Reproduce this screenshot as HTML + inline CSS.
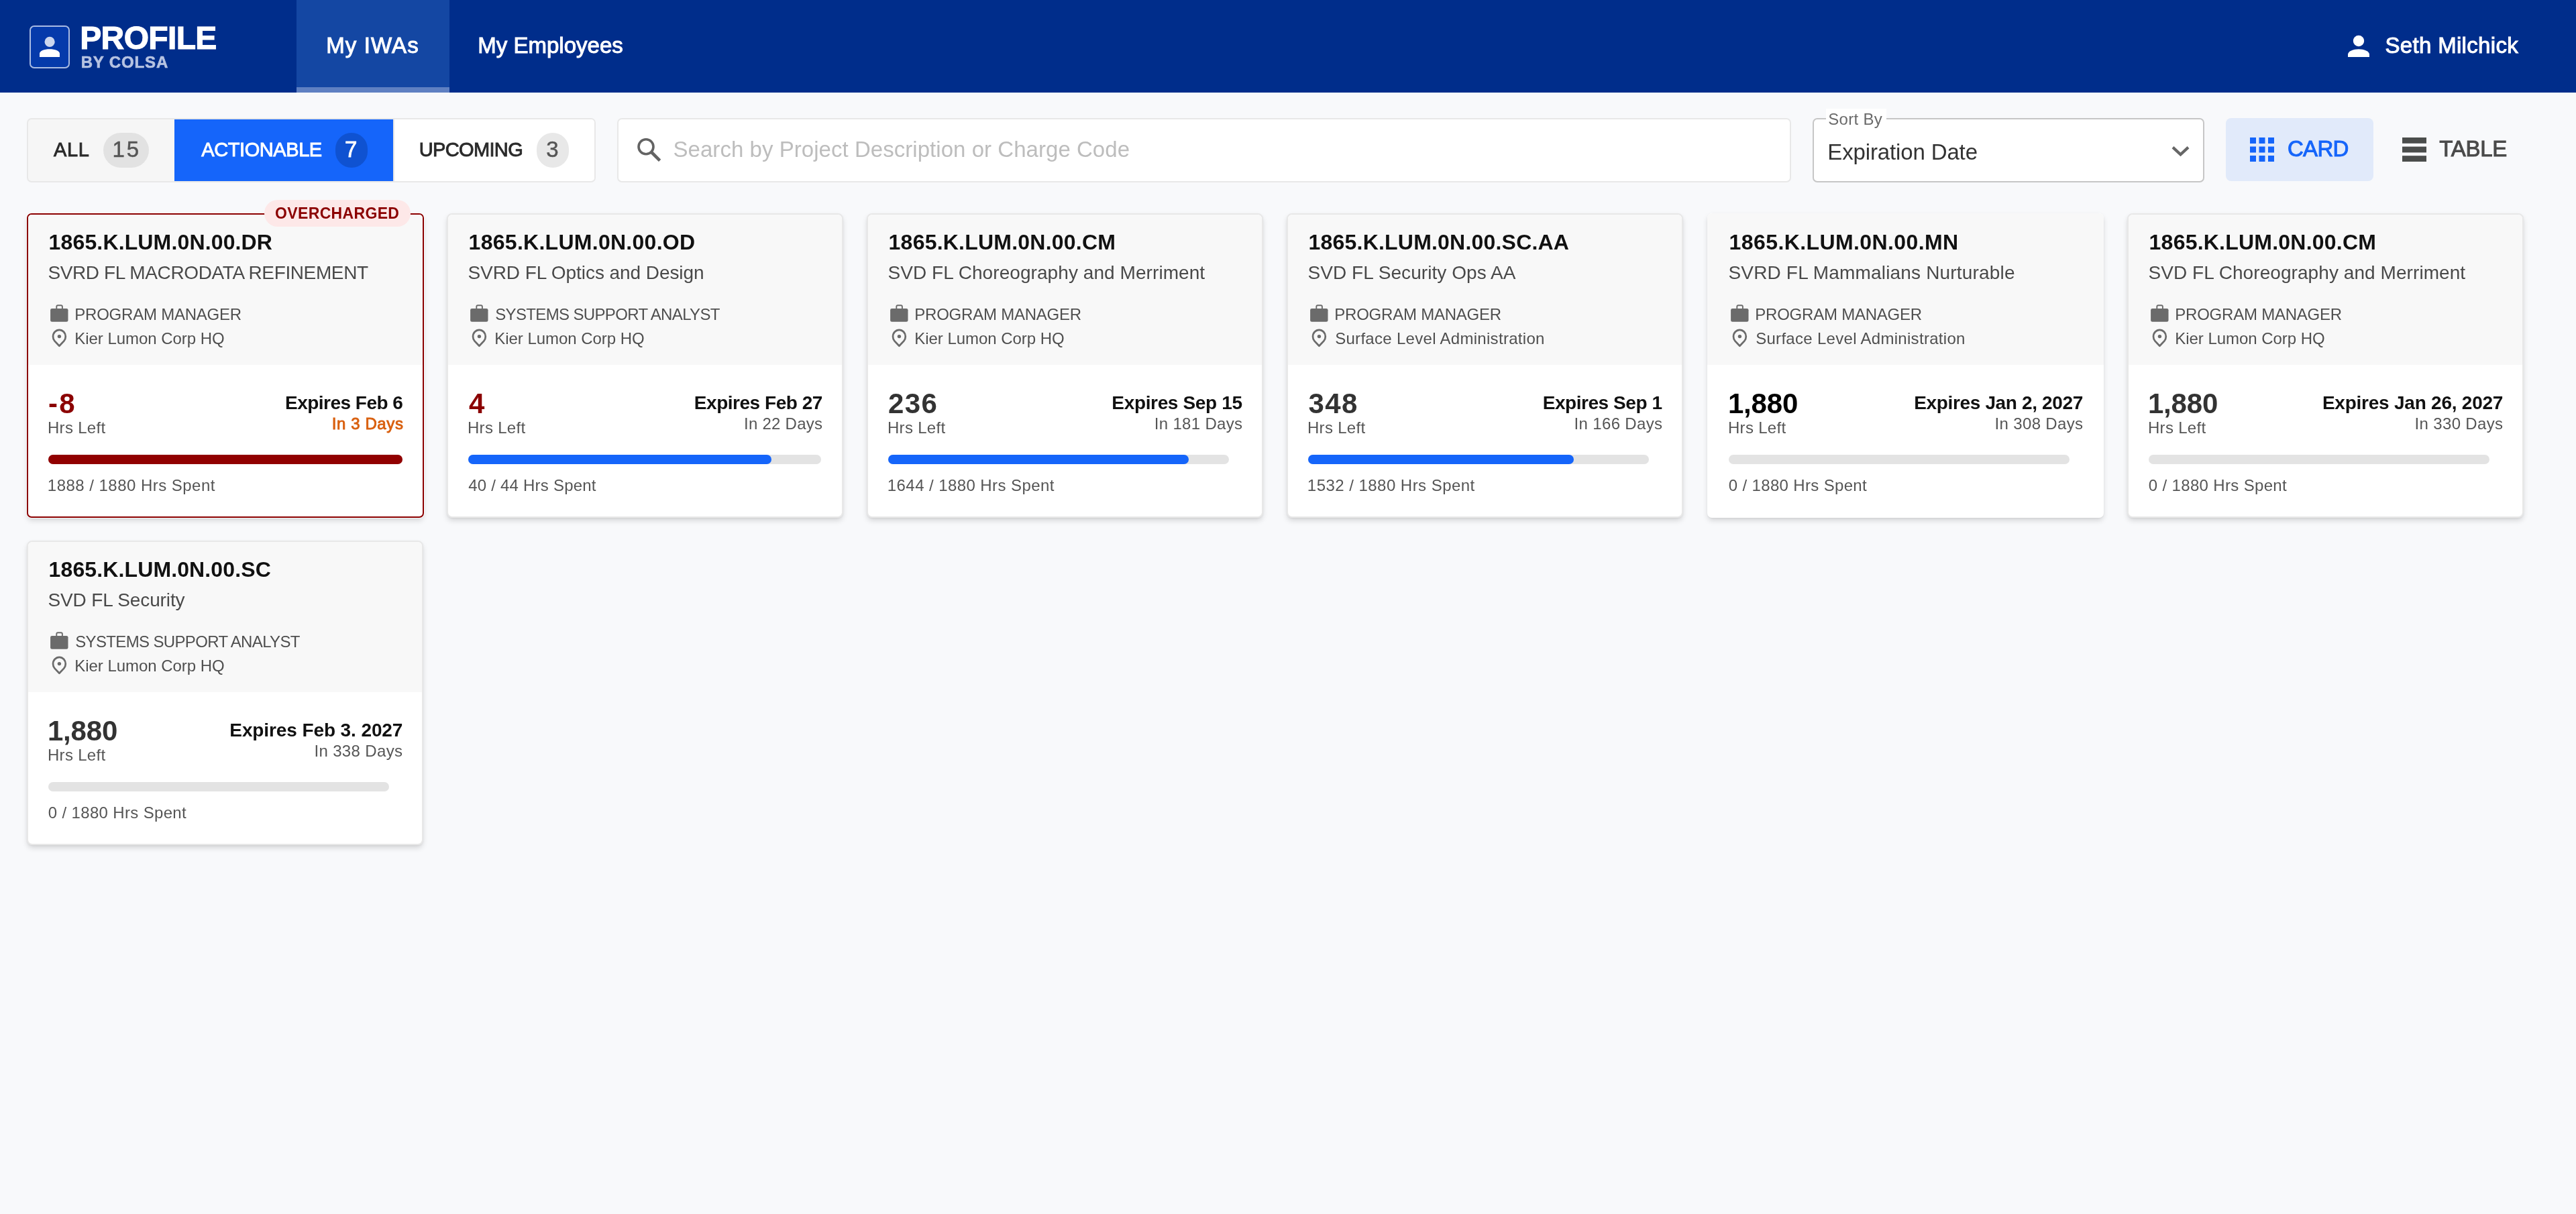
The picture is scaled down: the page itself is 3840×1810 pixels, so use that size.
<!DOCTYPE html><html><head><meta charset="utf-8"><style>
html,body{margin:0;padding:0;width:3840px;height:1810px;overflow:hidden;background:#f8f9fb;font-family:"Liberation Sans",sans-serif}
.t{position:absolute;white-space:nowrap}
</style></head><body><div id="w" style="position:absolute;left:0;top:0;width:3840px;height:1810px;will-change:transform">
<div style="position:absolute;left:0.00px;top:0.00px;width:3840.00px;height:138.00px;background:#002d8b"></div>
<div style="position:absolute;left:442.00px;top:0.00px;width:228.00px;height:130.00px;background:#1447a3"></div>
<div style="position:absolute;left:442.00px;top:130.00px;width:228.00px;height:8.00px;background:#5f80c2"></div>
<div style="position:absolute;left:44.00px;top:38.00px;width:60.00px;height:64.00px;background:#053aab;border:2px solid #a9bbe3;border-radius:7px;box-sizing:border-box"></div>
<svg style="position:absolute;left:44px;top:38px" width="60" height="64" viewBox="44 38 60 64"><circle cx="74.1" cy="62.4" r="7.6" fill="#cbd6ee"/><path d="M59 85 V80 C59 76 66 73.3 74 73.3 C82 73.3 89 76 89 80 V85 Z" fill="#fff"/></svg>
<div class="t" style="left:119.25px;top:33px;font-size:48px;line-height:48px;font-weight:700;color:#fff;letter-spacing:-0.646px;-webkit-text-stroke:1.10px #fff;">PROFILE</div>
<div class="t" style="left:120.67px;top:81px;font-size:24px;line-height:24px;font-weight:700;color:#b6c3e2;letter-spacing:0.861px;-webkit-text-stroke:0.60px #b6c3e2;">BY COLSA</div>
<div class="t" style="left:486.25px;top:51px;font-size:33px;line-height:33px;font-weight:400;color:#fff;letter-spacing:1.104px;-webkit-text-stroke:1.00px #fff;">My IWAs</div>
<div class="t" style="left:712.25px;top:51px;font-size:33px;line-height:33px;font-weight:400;color:#fff;letter-spacing:0.009px;-webkit-text-stroke:1.00px #fff;">My Employees</div>
<svg style="position:absolute;left:3496px;top:48px" width="40" height="40" viewBox="3496 48 40 40"><circle cx="3516" cy="61" r="8.2" fill="#fff"/><path d="M3500 85 V81 C3500 76.5 3508 73.2 3516 73.2 C3524 73.2 3532 76.5 3532 81 V85 Z" fill="#fff"/></svg>
<div class="t" style="left:3555.50px;top:51px;font-size:33px;line-height:33px;font-weight:400;color:#fff;letter-spacing:0.319px;-webkit-text-stroke:1.00px #fff;">Seth Milchick</div>
<div style="position:absolute;left:40.00px;top:176.00px;width:848.00px;height:96.00px;background:#f6f6f6;border:2px solid #e8e8e8;border-radius:7px;box-sizing:border-box;overflow:hidden"></div>
<div style="position:absolute;left:587.00px;top:178.00px;width:299.00px;height:92.00px;background:#fff;border-radius:0 5px 5px 0"></div>
<div style="position:absolute;left:260.00px;top:178.00px;width:326.00px;height:92.00px;background:#1565fa"></div>
<div style="position:absolute;left:586.00px;top:178.00px;width:1.50px;height:92.00px;background:#e6e6e6"></div>
<div class="t" style="left:79.88px;top:209px;font-size:29px;line-height:29px;font-weight:400;color:#2a2a2a;letter-spacing:0.750px;-webkit-text-stroke:0.90px #2a2a2a;">ALL</div>
<div style="position:absolute;left:154.00px;top:198.00px;width:68.00px;height:52.00px;background:#e2e2e2;border-radius:26px"></div>
<div class="t" style="left:167.50px;top:206px;font-size:33px;line-height:33px;font-weight:400;color:#555;letter-spacing:2.825px;-webkit-text-stroke:0.50px #555;">15</div>
<div class="t" style="left:300.27px;top:209px;font-size:29px;line-height:29px;font-weight:400;color:#fff;letter-spacing:-0.419px;-webkit-text-stroke:0.90px #fff;">ACTIONABLE</div>
<div style="position:absolute;left:500.00px;top:198.00px;width:48.00px;height:52.00px;background:#0f52d1;border-radius:26px"></div>
<div class="t" style="left:513.88px;top:206px;font-size:33px;line-height:33px;font-weight:400;color:#fff;letter-spacing:0.000px;-webkit-text-stroke:0.80px #fff;">7</div>
<div class="t" style="left:624.75px;top:209px;font-size:29px;line-height:29px;font-weight:400;color:#2a2a2a;letter-spacing:-0.646px;-webkit-text-stroke:0.90px #2a2a2a;">UPCOMING</div>
<div style="position:absolute;left:800.00px;top:198.00px;width:48.00px;height:52.00px;background:#e8e8e8;border-radius:26px"></div>
<div class="t" style="left:814.25px;top:206px;font-size:33px;line-height:33px;font-weight:400;color:#555;letter-spacing:0.000px;-webkit-text-stroke:0.50px #555;">3</div>
<div style="position:absolute;left:920.00px;top:176.00px;width:1750.00px;height:96.00px;background:#fff;border:2px solid #e8e8e8;border-radius:7px;box-sizing:border-box"></div>
<svg style="position:absolute;left:946px;top:202px" width="42" height="42" viewBox="946 202 42 42"><circle cx="963" cy="218.8" r="11" fill="none" stroke="#636363" stroke-width="3.6"/><path d="M971.2 227 L983.6 239.4" stroke="#636363" stroke-width="4.6"/></svg>
<div class="t" style="left:1003.50px;top:206px;font-size:33px;line-height:33px;font-weight:400;color:#bdbdbd;letter-spacing:0.043px;">Search by Project Description or Charge Code</div>
<div style="position:absolute;left:2702.00px;top:176.00px;width:584.00px;height:96.00px;background:#fff;border:2px solid #c6c6c6;border-radius:7px;box-sizing:border-box"></div>
<div style="position:absolute;left:2722.00px;top:162.00px;width:90.00px;height:18.00px;background:#fff"></div>
<div class="t" style="left:2725.28px;top:166px;font-size:24px;line-height:24px;font-weight:400;color:#6a6a6a;letter-spacing:0.296px;">Sort By</div>
<div class="t" style="left:2724.25px;top:210px;font-size:33px;line-height:33px;font-weight:400;color:#333;letter-spacing:-0.134px;">Expiration Date</div>
<svg style="position:absolute;left:3234px;top:214px" width="34" height="24" viewBox="3234 214 34 24"><path d="M3239 219.6 L3250.5 230.4 L3262 219.6" fill="none" stroke="#666" stroke-width="4.2"/></svg>
<div style="position:absolute;left:3318.00px;top:176.00px;width:220.00px;height:94.00px;background:#e1eafa;border-radius:8px"></div>
<svg style="position:absolute;left:3350px;top:200px" width="46" height="46" viewBox="3350 200 46 46"><rect x="3354.0" y="205.0" width="9" height="9" fill="#1565fa"/><rect x="3367.5" y="205.0" width="9" height="9" fill="#1565fa"/><rect x="3381.0" y="205.0" width="9" height="9" fill="#1565fa"/><rect x="3354.0" y="218.5" width="9" height="9" fill="#1565fa"/><rect x="3367.5" y="218.5" width="9" height="9" fill="#1565fa"/><rect x="3381.0" y="218.5" width="9" height="9" fill="#1565fa"/><rect x="3354.0" y="232.0" width="9" height="9" fill="#1565fa"/><rect x="3367.5" y="232.0" width="9" height="9" fill="#1565fa"/><rect x="3381.0" y="232.0" width="9" height="9" fill="#1565fa"/></svg>
<div class="t" style="left:3409.88px;top:205px;font-size:33px;line-height:33px;font-weight:400;color:#1565fa;letter-spacing:-0.650px;-webkit-text-stroke:1.00px #1565fa;">CARD</div>
<svg style="position:absolute;left:3578px;top:200px" width="46" height="46" viewBox="3578 200 46 46"><rect x="3581" y="205" width="36" height="8.8" fill="#4b4d4c"/><rect x="3581" y="218.6" width="36" height="8.8" fill="#4b4d4c"/><rect x="3581" y="232.2" width="36" height="8.8" fill="#4b4d4c"/></svg>
<div class="t" style="left:3636.25px;top:205px;font-size:33px;line-height:33px;font-weight:400;color:#4a4a4a;letter-spacing:-0.250px;-webkit-text-stroke:1.00px #4a4a4a;">TABLE</div>
<!-- ls code 0.144 -->
<!-- ls desc -0.382 -->
<!-- ls role -0.250 -->
<!-- ls loc -0.051 -->
<!-- ls hrs 0.500 -->
<!-- ls hl 0.275 -->
<!-- ls exp -0.346 -->
<!-- ls days 0.320 -->
<!-- ls daysb 0.547 -->
<!-- ls spent 0.419 -->
<div style="position:absolute;left:40.00px;top:318px;width:592px;height:454px;box-shadow:0 0 0 1px rgba(255,255,255,.85),0 4.5px 8px -1px rgba(0,0,0,.15),0 1px 3px 0 rgba(0,0,0,.06);background:#fff;border:2px solid #8b0000;border-radius:7px;box-sizing:border-box;overflow:hidden"><div style="height:224px;background:#f8f8f8;border-radius:5px 5px 0 0"></div></div>
<div class="t" style="left:72.60px;top:345px;font-size:32px;line-height:32px;font-weight:700;color:#111;letter-spacing:0.144px;">1865.K.LUM.0N.00.DR</div>
<div class="t" style="left:71.45px;top:393px;font-size:28px;line-height:28px;font-weight:400;color:#494949;letter-spacing:-0.382px;">SVRD FL MACRODATA REFINEMENT</div>
<svg style="position:absolute;left:72.70px;top:452.00px" width="32" height="30" viewBox="0 0 32 30"><path d="M11.3 8.5 V5.3 Q11.3 3.3 13.3 3.3 H17.9 Q19.9 3.3 19.9 5.3 V8.5" fill="none" stroke="#6b6b6b" stroke-width="1.9"/><rect x="2.1" y="7.9" width="26.4" height="19.9" rx="2.4" fill="#6b6b6b"/></svg>
<div class="t" style="left:111.30px;top:456.5px;font-size:24px;line-height:24px;font-weight:400;color:#4f4f4f;letter-spacing:-0.229px;">PROGRAM MANAGER</div>
<svg style="position:absolute;left:72.70px;top:488.00px" width="32" height="32" viewBox="0 0 32 32"><path d="M15.4 27.7 L8.6 20.6 C6.9 18.8 6 16.4 6 13.8 C6 8.4 10.2 3.8 15.4 3.8 C20.6 3.8 24.8 8.4 24.8 13.8 C24.8 16.4 23.9 18.8 22.2 20.6 Z" fill="none" stroke="#6b6b6b" stroke-width="2.7" stroke-linejoin="round"/><circle cx="15.4" cy="13.6" r="2.7" fill="#6b6b6b"/></svg>
<div class="t" style="left:111.30px;top:492.6px;font-size:24px;line-height:24px;font-weight:400;color:#4f4f4f;letter-spacing:-0.040px;">Kier Lumon Corp HQ</div>
<div class="t" style="left:71.88px;top:581px;font-size:42px;line-height:42px;font-weight:700;color:#8b0000;letter-spacing:2.500px;">-8</div>
<div class="t" style="left:71.00px;top:626px;font-size:24px;line-height:24px;font-weight:400;color:#555;letter-spacing:0.289px;">Hrs Left</div>
<div class="t" style="left:425.02px;top:587px;font-size:28px;line-height:28px;font-weight:700;color:#111;letter-spacing:-0.513px;">Expires Feb 6</div>
<div class="t" style="left:494.75px;top:619.7px;font-size:24px;line-height:24px;font-weight:400;color:#d9600f;letter-spacing:0.594px;-webkit-text-stroke:0.90px #d9600f;">In 3 Days</div>
<div style="position:absolute;left:72.00px;top:678.00px;width:528.00px;height:14.00px;background:#e3e3e3;border-radius:7px"></div>
<div style="position:absolute;left:72.00px;top:678.00px;width:528.00px;height:14.00px;background:#910000;border-radius:7px"></div>
<div class="t" style="left:70.83px;top:712.3px;font-size:24px;line-height:24px;font-weight:400;color:#555;letter-spacing:0.469px;">1888 / 1880 Hrs Spent</div>
<div style="position:absolute;left:394.00px;top:298.00px;width:218.00px;height:39.70px;background:#fde8e8;border-radius:20px"></div>
<div class="t" style="left:410.12px;top:307px;font-size:23px;line-height:23px;font-weight:700;color:#8b0000;letter-spacing:0.338px;">OVERCHARGED</div>
<div style="position:absolute;left:666.00px;top:318px;width:591px;height:454px;box-shadow:0 4.5px 8px -1px rgba(0,0,0,.15),0 1px 3px 0 rgba(0,0,0,.06);background:#fff;border:2px solid #e8e8e8;border-radius:8px;box-sizing:border-box;overflow:hidden"><div style="height:224px;background:#f8f8f8;border-radius:6px 6px 0 0"></div></div>
<div class="t" style="left:698.60px;top:345px;font-size:32px;line-height:32px;font-weight:700;color:#111;letter-spacing:0.275px;">1865.K.LUM.0N.00.OD</div>
<div class="t" style="left:697.45px;top:393px;font-size:28px;line-height:28px;font-weight:400;color:#494949;letter-spacing:-0.069px;">SVRD FL Optics and Design</div>
<svg style="position:absolute;left:698.70px;top:452.00px" width="32" height="30" viewBox="0 0 32 30"><path d="M11.3 8.5 V5.3 Q11.3 3.3 13.3 3.3 H17.9 Q19.9 3.3 19.9 5.3 V8.5" fill="none" stroke="#6b6b6b" stroke-width="1.9"/><rect x="2.1" y="7.9" width="26.4" height="19.9" rx="2.4" fill="#6b6b6b"/></svg>
<div class="t" style="left:738.18px;top:456.5px;font-size:24px;line-height:24px;font-weight:400;color:#4f4f4f;letter-spacing:-0.643px;">SYSTEMS SUPPORT ANALYST</div>
<svg style="position:absolute;left:698.70px;top:488.00px" width="32" height="32" viewBox="0 0 32 32"><path d="M15.4 27.7 L8.6 20.6 C6.9 18.8 6 16.4 6 13.8 C6 8.4 10.2 3.8 15.4 3.8 C20.6 3.8 24.8 8.4 24.8 13.8 C24.8 16.4 23.9 18.8 22.2 20.6 Z" fill="none" stroke="#6b6b6b" stroke-width="2.7" stroke-linejoin="round"/><circle cx="15.4" cy="13.6" r="2.7" fill="#6b6b6b"/></svg>
<div class="t" style="left:737.30px;top:492.6px;font-size:24px;line-height:24px;font-weight:400;color:#4f4f4f;letter-spacing:-0.040px;">Kier Lumon Corp HQ</div>
<div class="t" style="left:698.88px;top:581px;font-size:42px;line-height:42px;font-weight:700;color:#8b0000;letter-spacing:0.000px;">4</div>
<div class="t" style="left:697.00px;top:626px;font-size:24px;line-height:24px;font-weight:400;color:#555;letter-spacing:0.289px;">Hrs Left</div>
<div class="t" style="left:1034.83px;top:587px;font-size:28px;line-height:28px;font-weight:700;color:#111;letter-spacing:-0.471px;">Expires Feb 27</div>
<div class="t" style="left:1109.05px;top:619.7px;font-size:24px;line-height:24px;font-weight:400;color:#555;letter-spacing:0.253px;">In 22 Days</div>
<div style="position:absolute;left:698.00px;top:678.00px;width:526.00px;height:14.00px;background:#e3e3e3;border-radius:7px"></div>
<div style="position:absolute;left:698.00px;top:678.00px;width:451.70px;height:14.00px;background:#1565fa;border-radius:7px"></div>
<div class="t" style="left:698.20px;top:712.3px;font-size:24px;line-height:24px;font-weight:400;color:#555;letter-spacing:0.223px;">40 / 44 Hrs Spent</div>
<div style="position:absolute;left:1292.00px;top:318px;width:591px;height:454px;box-shadow:0 4.5px 8px -1px rgba(0,0,0,.15),0 1px 3px 0 rgba(0,0,0,.06);background:#fff;border:2px solid #e8e8e8;border-radius:8px;box-sizing:border-box;overflow:hidden"><div style="height:224px;background:#f8f8f8;border-radius:6px 6px 0 0"></div></div>
<div class="t" style="left:1324.60px;top:345px;font-size:32px;line-height:32px;font-weight:700;color:#111;letter-spacing:0.221px;">1865.K.LUM.0N.00.CM</div>
<div class="t" style="left:1323.45px;top:393px;font-size:28px;line-height:28px;font-weight:400;color:#494949;letter-spacing:0.068px;">SVD FL Choreography and Merriment</div>
<svg style="position:absolute;left:1324.70px;top:452.00px" width="32" height="30" viewBox="0 0 32 30"><path d="M11.3 8.5 V5.3 Q11.3 3.3 13.3 3.3 H17.9 Q19.9 3.3 19.9 5.3 V8.5" fill="none" stroke="#6b6b6b" stroke-width="1.9"/><rect x="2.1" y="7.9" width="26.4" height="19.9" rx="2.4" fill="#6b6b6b"/></svg>
<div class="t" style="left:1363.30px;top:456.5px;font-size:24px;line-height:24px;font-weight:400;color:#4f4f4f;letter-spacing:-0.229px;">PROGRAM MANAGER</div>
<svg style="position:absolute;left:1324.70px;top:488.00px" width="32" height="32" viewBox="0 0 32 32"><path d="M15.4 27.7 L8.6 20.6 C6.9 18.8 6 16.4 6 13.8 C6 8.4 10.2 3.8 15.4 3.8 C20.6 3.8 24.8 8.4 24.8 13.8 C24.8 16.4 23.9 18.8 22.2 20.6 Z" fill="none" stroke="#6b6b6b" stroke-width="2.7" stroke-linejoin="round"/><circle cx="15.4" cy="13.6" r="2.7" fill="#6b6b6b"/></svg>
<div class="t" style="left:1363.30px;top:492.6px;font-size:24px;line-height:24px;font-weight:400;color:#4f4f4f;letter-spacing:-0.040px;">Kier Lumon Corp HQ</div>
<div class="t" style="left:1324.00px;top:581px;font-size:42px;line-height:42px;font-weight:700;color:#333;letter-spacing:1.337px;">236</div>
<div class="t" style="left:1323.00px;top:626px;font-size:24px;line-height:24px;font-weight:400;color:#555;letter-spacing:0.289px;">Hrs Left</div>
<div class="t" style="left:1657.33px;top:587px;font-size:28px;line-height:28px;font-weight:700;color:#111;letter-spacing:-0.346px;">Expires Sep 15</div>
<div class="t" style="left:1720.75px;top:619.7px;font-size:24px;line-height:24px;font-weight:400;color:#555;letter-spacing:0.320px;">In 181 Days</div>
<div style="position:absolute;left:1324.00px;top:678.00px;width:508.00px;height:14.00px;background:#e3e3e3;border-radius:7px"></div>
<div style="position:absolute;left:1324.00px;top:678.00px;width:448.20px;height:14.00px;background:#1565fa;border-radius:7px"></div>
<div class="t" style="left:1322.83px;top:712.3px;font-size:24px;line-height:24px;font-weight:400;color:#555;letter-spacing:0.419px;">1644 / 1880 Hrs Spent</div>
<div style="position:absolute;left:1918.00px;top:318px;width:591px;height:454px;box-shadow:0 4.5px 8px -1px rgba(0,0,0,.15),0 1px 3px 0 rgba(0,0,0,.06);background:#fff;border:2px solid #e8e8e8;border-radius:8px;box-sizing:border-box;overflow:hidden"><div style="height:224px;background:#f8f8f8;border-radius:6px 6px 0 0"></div></div>
<div class="t" style="left:1950.60px;top:345px;font-size:32px;line-height:32px;font-weight:700;color:#111;letter-spacing:0.202px;">1865.K.LUM.0N.00.SC.AA</div>
<div class="t" style="left:1949.45px;top:393px;font-size:28px;line-height:28px;font-weight:400;color:#494949;letter-spacing:0.068px;">SVD FL Security Ops AA</div>
<svg style="position:absolute;left:1950.70px;top:452.00px" width="32" height="30" viewBox="0 0 32 30"><path d="M11.3 8.5 V5.3 Q11.3 3.3 13.3 3.3 H17.9 Q19.9 3.3 19.9 5.3 V8.5" fill="none" stroke="#6b6b6b" stroke-width="1.9"/><rect x="2.1" y="7.9" width="26.4" height="19.9" rx="2.4" fill="#6b6b6b"/></svg>
<div class="t" style="left:1989.30px;top:456.5px;font-size:24px;line-height:24px;font-weight:400;color:#4f4f4f;letter-spacing:-0.229px;">PROGRAM MANAGER</div>
<svg style="position:absolute;left:1950.70px;top:488.00px" width="32" height="32" viewBox="0 0 32 32"><path d="M15.4 27.7 L8.6 20.6 C6.9 18.8 6 16.4 6 13.8 C6 8.4 10.2 3.8 15.4 3.8 C20.6 3.8 24.8 8.4 24.8 13.8 C24.8 16.4 23.9 18.8 22.2 20.6 Z" fill="none" stroke="#6b6b6b" stroke-width="2.7" stroke-linejoin="round"/><circle cx="15.4" cy="13.6" r="2.7" fill="#6b6b6b"/></svg>
<div class="t" style="left:1990.17px;top:492.6px;font-size:24px;line-height:24px;font-weight:400;color:#4f4f4f;letter-spacing:0.300px;">Surface Level Administration</div>
<div class="t" style="left:1950.50px;top:581px;font-size:42px;line-height:42px;font-weight:700;color:#333;letter-spacing:1.413px;">348</div>
<div class="t" style="left:1949.00px;top:626px;font-size:24px;line-height:24px;font-weight:400;color:#555;letter-spacing:0.289px;">Hrs Left</div>
<div class="t" style="left:2299.72px;top:587px;font-size:28px;line-height:28px;font-weight:700;color:#111;letter-spacing:-0.450px;">Expires Sep 1</div>
<div class="t" style="left:2346.55px;top:619.7px;font-size:24px;line-height:24px;font-weight:400;color:#555;letter-spacing:0.340px;">In 166 Days</div>
<div style="position:absolute;left:1950.00px;top:678.00px;width:508.00px;height:14.00px;background:#e3e3e3;border-radius:7px"></div>
<div style="position:absolute;left:1950.00px;top:678.00px;width:396.40px;height:14.00px;background:#1565fa;border-radius:7px"></div>
<div class="t" style="left:1948.83px;top:712.3px;font-size:24px;line-height:24px;font-weight:400;color:#555;letter-spacing:0.464px;">1532 / 1880 Hrs Spent</div>
<div style="position:absolute;left:2545.00px;top:318px;width:591px;height:454px;box-shadow:0 4.5px 8px -1px rgba(0,0,0,.15),0 1px 3px 0 rgba(0,0,0,.06);background:#fff;border-radius:7px;overflow:hidden"><div style="height:226px;background:#f8f8f8;border-radius:7px 7px 0 0"></div></div>
<div class="t" style="left:2577.60px;top:345px;font-size:32px;line-height:32px;font-weight:700;color:#111;letter-spacing:0.403px;">1865.K.LUM.0N.00.MN</div>
<div class="t" style="left:2576.45px;top:393px;font-size:28px;line-height:28px;font-weight:400;color:#494949;letter-spacing:0.173px;">SVRD FL Mammalians Nurturable</div>
<svg style="position:absolute;left:2577.70px;top:452.00px" width="32" height="30" viewBox="0 0 32 30"><path d="M11.3 8.5 V5.3 Q11.3 3.3 13.3 3.3 H17.9 Q19.9 3.3 19.9 5.3 V8.5" fill="none" stroke="#6b6b6b" stroke-width="1.9"/><rect x="2.1" y="7.9" width="26.4" height="19.9" rx="2.4" fill="#6b6b6b"/></svg>
<div class="t" style="left:2616.30px;top:456.5px;font-size:24px;line-height:24px;font-weight:400;color:#4f4f4f;letter-spacing:-0.229px;">PROGRAM MANAGER</div>
<svg style="position:absolute;left:2577.70px;top:488.00px" width="32" height="32" viewBox="0 0 32 32"><path d="M15.4 27.7 L8.6 20.6 C6.9 18.8 6 16.4 6 13.8 C6 8.4 10.2 3.8 15.4 3.8 C20.6 3.8 24.8 8.4 24.8 13.8 C24.8 16.4 23.9 18.8 22.2 20.6 Z" fill="none" stroke="#6b6b6b" stroke-width="2.7" stroke-linejoin="round"/><circle cx="15.4" cy="13.6" r="2.7" fill="#6b6b6b"/></svg>
<div class="t" style="left:2617.17px;top:492.6px;font-size:24px;line-height:24px;font-weight:400;color:#4f4f4f;letter-spacing:0.300px;">Surface Level Administration</div>
<div class="t" style="left:2575.88px;top:581px;font-size:42px;line-height:42px;font-weight:700;color:#000;letter-spacing:-0.163px;">1,880</div>
<div class="t" style="left:2576.00px;top:626px;font-size:24px;line-height:24px;font-weight:400;color:#555;letter-spacing:0.289px;">Hrs Left</div>
<div class="t" style="left:2853.22px;top:587px;font-size:28px;line-height:28px;font-weight:700;color:#111;letter-spacing:-0.349px;">Expires Jan 2, 2027</div>
<div class="t" style="left:2973.55px;top:619.7px;font-size:24px;line-height:24px;font-weight:400;color:#555;letter-spacing:0.340px;">In 308 Days</div>
<div style="position:absolute;left:2577.00px;top:678.00px;width:508.00px;height:14.00px;background:#e3e3e3;border-radius:7px"></div>
<div class="t" style="left:2576.82px;top:712.3px;font-size:24px;line-height:24px;font-weight:400;color:#555;letter-spacing:0.340px;">0 / 1880 Hrs Spent</div>
<div style="position:absolute;left:3171.00px;top:318px;width:591px;height:454px;box-shadow:0 4.5px 8px -1px rgba(0,0,0,.15),0 1px 3px 0 rgba(0,0,0,.06);background:#fff;border:2px solid #e8e8e8;border-radius:8px;box-sizing:border-box;overflow:hidden"><div style="height:224px;background:#f8f8f8;border-radius:6px 6px 0 0"></div></div>
<div class="t" style="left:3203.60px;top:345px;font-size:32px;line-height:32px;font-weight:700;color:#111;letter-spacing:0.221px;">1865.K.LUM.0N.00.CM</div>
<div class="t" style="left:3202.45px;top:393px;font-size:28px;line-height:28px;font-weight:400;color:#494949;letter-spacing:0.068px;">SVD FL Choreography and Merriment</div>
<svg style="position:absolute;left:3203.70px;top:452.00px" width="32" height="30" viewBox="0 0 32 30"><path d="M11.3 8.5 V5.3 Q11.3 3.3 13.3 3.3 H17.9 Q19.9 3.3 19.9 5.3 V8.5" fill="none" stroke="#6b6b6b" stroke-width="1.9"/><rect x="2.1" y="7.9" width="26.4" height="19.9" rx="2.4" fill="#6b6b6b"/></svg>
<div class="t" style="left:3242.30px;top:456.5px;font-size:24px;line-height:24px;font-weight:400;color:#4f4f4f;letter-spacing:-0.229px;">PROGRAM MANAGER</div>
<svg style="position:absolute;left:3203.70px;top:488.00px" width="32" height="32" viewBox="0 0 32 32"><path d="M15.4 27.7 L8.6 20.6 C6.9 18.8 6 16.4 6 13.8 C6 8.4 10.2 3.8 15.4 3.8 C20.6 3.8 24.8 8.4 24.8 13.8 C24.8 16.4 23.9 18.8 22.2 20.6 Z" fill="none" stroke="#6b6b6b" stroke-width="2.7" stroke-linejoin="round"/><circle cx="15.4" cy="13.6" r="2.7" fill="#6b6b6b"/></svg>
<div class="t" style="left:3242.30px;top:492.6px;font-size:24px;line-height:24px;font-weight:400;color:#4f4f4f;letter-spacing:-0.040px;">Kier Lumon Corp HQ</div>
<div class="t" style="left:3201.88px;top:581px;font-size:42px;line-height:42px;font-weight:700;color:#333;letter-spacing:-0.163px;">1,880</div>
<div class="t" style="left:3202.00px;top:626px;font-size:24px;line-height:24px;font-weight:400;color:#555;letter-spacing:0.289px;">Hrs Left</div>
<div class="t" style="left:3461.92px;top:587px;font-size:28px;line-height:28px;font-weight:700;color:#111;letter-spacing:-0.236px;">Expires Jan 26, 2027</div>
<div class="t" style="left:3599.55px;top:619.7px;font-size:24px;line-height:24px;font-weight:400;color:#555;letter-spacing:0.340px;">In 330 Days</div>
<div style="position:absolute;left:3203.00px;top:678.00px;width:508.00px;height:14.00px;background:#e3e3e3;border-radius:7px"></div>
<div class="t" style="left:3202.82px;top:712.3px;font-size:24px;line-height:24px;font-weight:400;color:#555;letter-spacing:0.340px;">0 / 1880 Hrs Spent</div>
<div style="position:absolute;left:40.00px;top:806px;width:591px;height:454px;box-shadow:0 4.5px 8px -1px rgba(0,0,0,.15),0 1px 3px 0 rgba(0,0,0,.06);background:#fff;border:2px solid #e8e8e8;border-radius:8px;box-sizing:border-box;overflow:hidden"><div style="height:224px;background:#f8f8f8;border-radius:6px 6px 0 0"></div></div>
<div class="t" style="left:72.60px;top:833px;font-size:32px;line-height:32px;font-weight:700;color:#111;letter-spacing:0.121px;">1865.K.LUM.0N.00.SC</div>
<div class="t" style="left:71.45px;top:881px;font-size:28px;line-height:28px;font-weight:400;color:#494949;letter-spacing:-0.129px;">SVD FL Security</div>
<svg style="position:absolute;left:72.70px;top:940.00px" width="32" height="30" viewBox="0 0 32 30"><path d="M11.3 8.5 V5.3 Q11.3 3.3 13.3 3.3 H17.9 Q19.9 3.3 19.9 5.3 V8.5" fill="none" stroke="#6b6b6b" stroke-width="1.9"/><rect x="2.1" y="7.9" width="26.4" height="19.9" rx="2.4" fill="#6b6b6b"/></svg>
<div class="t" style="left:112.18px;top:944.5px;font-size:24px;line-height:24px;font-weight:400;color:#4f4f4f;letter-spacing:-0.643px;">SYSTEMS SUPPORT ANALYST</div>
<svg style="position:absolute;left:72.70px;top:976.00px" width="32" height="32" viewBox="0 0 32 32"><path d="M15.4 27.7 L8.6 20.6 C6.9 18.8 6 16.4 6 13.8 C6 8.4 10.2 3.8 15.4 3.8 C20.6 3.8 24.8 8.4 24.8 13.8 C24.8 16.4 23.9 18.8 22.2 20.6 Z" fill="none" stroke="#6b6b6b" stroke-width="2.7" stroke-linejoin="round"/><circle cx="15.4" cy="13.6" r="2.7" fill="#6b6b6b"/></svg>
<div class="t" style="left:111.30px;top:980.6px;font-size:24px;line-height:24px;font-weight:400;color:#4f4f4f;letter-spacing:-0.040px;">Kier Lumon Corp HQ</div>
<div class="t" style="left:70.88px;top:1069px;font-size:42px;line-height:42px;font-weight:700;color:#333;letter-spacing:-0.163px;">1,880</div>
<div class="t" style="left:71.00px;top:1114px;font-size:24px;line-height:24px;font-weight:400;color:#555;letter-spacing:0.289px;">Hrs Left</div>
<div class="t" style="left:342.33px;top:1075px;font-size:28px;line-height:28px;font-weight:700;color:#111;letter-spacing:-0.104px;">Expires Feb 3. 2027</div>
<div class="t" style="left:468.45px;top:1107.7px;font-size:24px;line-height:24px;font-weight:400;color:#555;letter-spacing:0.350px;">In 338 Days</div>
<div style="position:absolute;left:72.00px;top:1166.00px;width:508.00px;height:14.00px;background:#e3e3e3;border-radius:7px"></div>
<div class="t" style="left:71.83px;top:1200.3px;font-size:24px;line-height:24px;font-weight:400;color:#555;letter-spacing:0.340px;">0 / 1880 Hrs Spent</div>
</div></body></html>
